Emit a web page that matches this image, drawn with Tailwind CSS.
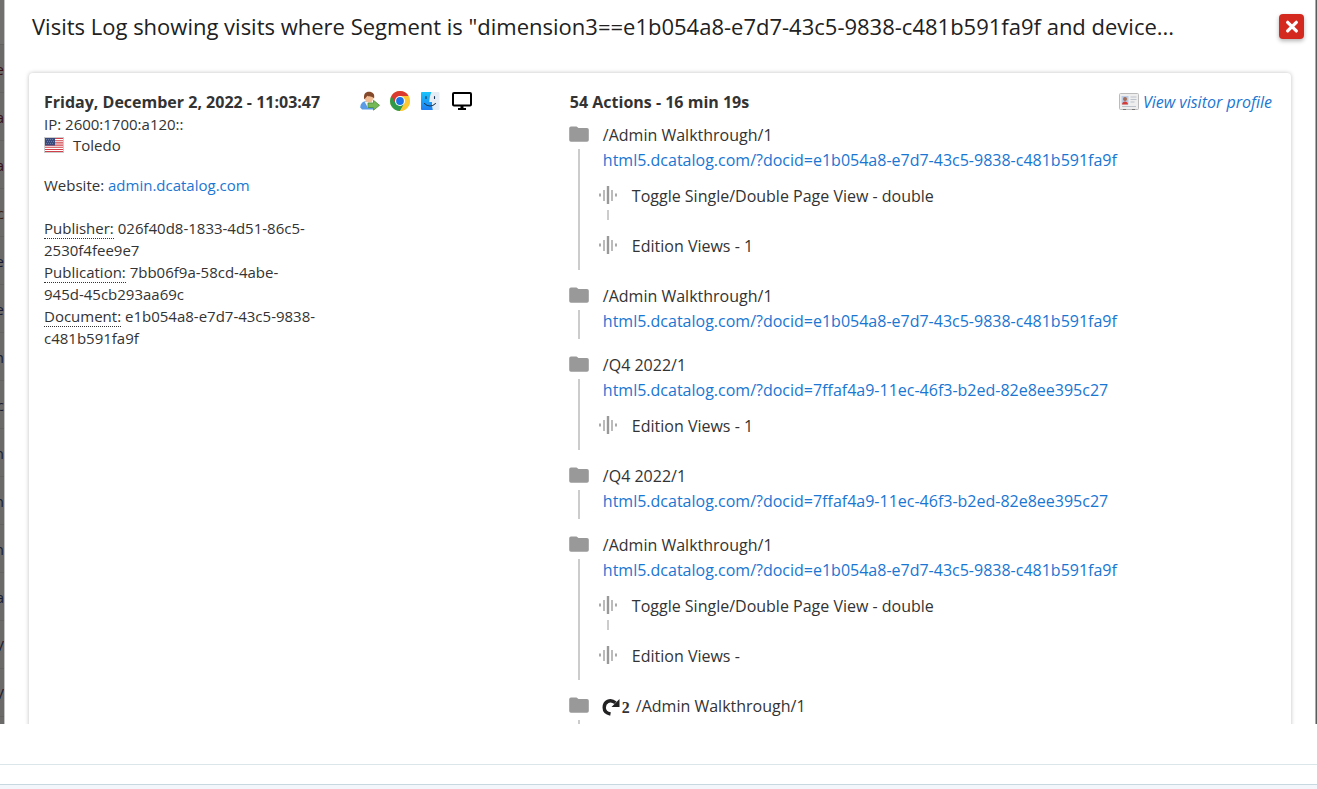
<!DOCTYPE html>
<html lang="en">
  <head>
    <meta charset="UTF-8" />
    <meta name="viewport" content="width=device-width, initial-scale=1.0" />
    <title>Visits Log</title>
    <script src="https://cdn.jsdelivr.net/npm/@tailwindcss/browser@4"></script>
  </head>
  <body class="flex h-screen flex-col overflow-hidden bg-white font-['Open_Sans','Noto_Sans',sans-serif] text-[15px] leading-[22px] text-[#333]">
    <!-- shared icons -->
    <svg class="hidden">
      <symbol id="folder" viewBox="0 0 20 16">
        <path d="M2 0.500h5.500l2 1.500H18a1.800 1.800 0 0 1 1.800 1.800V14a1.800 1.800 0 0 1-1.800 1.800H2A1.800 1.800 0 0 1 .2 14V2.300A1.800 1.800 0 0 1 2 .5z" fill="#999" />
      </symbol>
      <symbol id="event" viewBox="0 0 18 18">
        <path d="M1 7.500v3M17 7.500v3" stroke="#aaa" stroke-width="2" />
        <path d="M5 4v11M13 4v11" stroke="#bbb" stroke-width="2" />
        <path d="M9 0v18" stroke="#999" stroke-width="2.400" />
      </symbol>
    </svg>

    <div class="flex min-h-0 flex-1 overflow-hidden">
      <!-- page behind the overlay -->
      <aside aria-hidden="true" class="w-[5px] shrink-0 overflow-hidden border-r border-[#c4c4c4] bg-[#6c6a68] text-[#1c1c30]">
        <div class="h-11 bg-[#72706e]"></div>
        <ul>
          <li class="flex h-12 items-center justify-end border-t border-[#646260] text-[#3a1010]">e</li>
          <li class="flex h-12 items-center justify-end border-t border-[#646260] text-[#3a1010]">a</li>
          <li class="flex h-12 items-center justify-end border-t border-[#646260] text-[#3a1010]">a</li>
          <li class="flex h-12 items-center justify-end border-t border-[#646260] text-[#3a2010]">c</li>
          <li class="flex h-12 items-center justify-end border-t border-[#646260]">e</li>
          <li class="flex h-12 items-center justify-end border-t border-[#646260]">e</li>
          <li class="flex h-12 items-center justify-end border-t border-[#646260]">h</li>
          <li class="flex h-12 items-center justify-end border-t border-[#646260]">c</li>
          <li class="flex h-12 items-center justify-end border-t border-[#646260]">n</li>
          <li class="flex h-12 items-center justify-end border-t border-[#646260]">n</li>
          <li class="flex h-12 items-center justify-end border-t border-[#646260]">n</li>
          <li class="flex h-12 items-center justify-end border-t border-[#646260]">a</li>
          <li class="flex h-12 items-center justify-end border-t border-[#646260]">V</li>
          <li class="flex h-12 items-center justify-end border-t border-[#646260]">V</li>
          <li class="h-12 border-t border-[#646260]"></li>
        </ul>
      </aside>

      <main class="min-w-0 flex-1 pr-[11px] pl-6">
        <header class="flex h-[73px] items-start justify-between pt-3">
          <h1 class="truncate pl-[3px] text-[22px] leading-7 text-[#212121]">Visits Log showing visits where Segment is "dimension3==e1b054a8-e7d7-43c5-9838-c481b591fa9f and device...</h1>
          <button type="button" aria-label="Close" class="mt-[2px] flex size-[25px] shrink-0 items-center justify-center rounded bg-[#d4291f] shadow-[0_2px_4px_rgba(0,0,0,0.3)]">
            <svg viewBox="0 0 12 12" class="size-[14px]"><path d="M2.300 2l7.400 7.400M9.700 2l-7.400 7.400" stroke="#fff" stroke-width="2.800" stroke-linecap="round" /></svg>
          </button>
        </header>

        <section class="mr-[13px] grid grid-cols-12 rounded-sm bg-white pt-[18px] shadow-[0_0_4px_rgba(0,0,0,0.25)]">
          <div class="col-span-3 px-[15px]">
            <h2 class="text-base leading-[22px] font-bold whitespace-nowrap">Friday, December 2, 2022 - 11:03:47</h2>
            <p>IP: 2600:1700:a120::</p>
            <p class="flex items-center gap-[9px] leading-5">
              <svg viewBox="0 0 20 16" class="h-4 w-5">
                <rect width="20" height="16" fill="#ccc" />
                <rect x="1" y="1" width="18" height="14" fill="#fff" />
                <path d="M1 1.500h18M1 3.700h18M1 5.900h18M1 8.100h18M1 10.300h18M1 12.500h18M1 14.500h18" stroke="#d0404a" stroke-width="1.100" />
                <rect x="1" y="1" width="10" height="7.500" fill="#3a4a7c" />
                <path d="M2 2.500h8M3 4.500h7M2 6.500h8" stroke="#8290b4" stroke-width=".7" stroke-dasharray="1 1" />
              </svg>
              <span>Toledo</span>
            </p>
            <p class="mt-[19px]">Website: <a href="#" class="text-[#1976d2]">admin.dcatalog.com</a></p>
            <div class="mt-[21px]">
              <p><span class="border-b border-dotted border-[#333]">Publisher:</span> 026f40d8-1833-4d51-86c5-2530f4fee9e7</p>
              <p><span class="border-b border-dotted border-[#333]">Publication:</span> 7bb06f9a-58cd-4abe-<br />945d-45cb293aa69c</p>
              <p><span class="border-b border-dotted border-[#333]">Document:</span> e1b054a8-e7d7-43c5-9838-c481b591fa9f</p>
            </div>
          </div>

          <div class="col-span-2 flex items-start gap-[10px] px-[15px]">
            <!-- returning visitor -->
            <svg viewBox="0 0 20 20" class="size-5">
              <path d="M.3 16.500c0-3.500 2-6 5.700-6.500h5l3 8.500H2z" fill="#5b9be6" />
              <path d="M4.500 10.500L8 17l4-6z" fill="#f2f4f8" />
              <ellipse cx="9" cy="7" rx="4.200" ry="4.500" fill="#f0bd94" />
              <path d="M4.200 8.500C3.300 3 5.500.8 9 .8s6.200 2 5 7C13.200 5.500 10 6 7.500 4.800 6 6 5.600 7.500 4.200 8.500z" fill="#84492a" />
              <path d="M8 12h5.500V9.300l6 5-6 4.900v-2.700H8z" fill="#75b957" stroke="#4b8d37" stroke-width=".8" />
            </svg>
            <!-- chrome -->
            <svg viewBox="0 0 20 20" class="size-5">
              <circle cx="10" cy="10" r="10" fill="#fcc934" />
              <path d="M10 10L1.340 5A10 10 0 0 0 10 20l4.330-7.500z" fill="#2d9a4b" />
              <path d="M1.340 5A10 10 0 0 1 18.660 5H10L5.670 12.500z" fill="#db3a30" />
              <path d="M10 5h8.660A10 10 0 0 1 10 20l4.330-7.500z" fill="#fcc934" />
              <circle cx="10" cy="10" r="5" fill="#fff" />
              <circle cx="10" cy="10" r="3.900" fill="#1a73e8" />
            </svg>
            <!-- finder -->
            <svg viewBox="0 0 20 20" class="size-5">
              <defs>
                <linearGradient id="finder" x1="0" y1="0" x2="0" y2="1"><stop stop-color="#19c4fb" /><stop offset="1" stop-color="#1d7df2" /></linearGradient>
              </defs>
              <rect x="1" y="1" width="18.500" height="18" rx="1" fill="#e6edf5" />
              <path d="M2 1h9.500C10 4 9.500 7 9.300 11H12c0 3 .2 5.500.8 8H2a1 1 0 0 1-1-1V2a1 1 0 0 1 1-1z" fill="url(#finder)" />
              <path d="M6 5.500v2M14.500 5.500v2M4.500 12.500c3 3.300 8 3.300 11 0" fill="none" stroke="#17344f" stroke-width="1.100" stroke-linecap="round" />
            </svg>
            <!-- desktop -->
            <svg viewBox="0 0 20 20" class="ml-[2px] size-5">
              <rect x="1" y="2" width="18" height="12.500" rx="1" fill="none" stroke="#000" stroke-width="2" />
              <path d="M8.500 14h3v3H14v2H6v-2h2.500z" />
            </svg>
          </div>

          <div class="col-span-7 pr-[15px] pl-[14px] text-base">
            <div class="flex items-center justify-between pr-1 pl-px leading-[22px]">
              <h2 class="font-bold">54 Actions - 16 min 19s</h2>
              <a href="#" class="flex items-center gap-1 text-[#1976d2] italic">
                <svg viewBox="0 0 20 18" class="h-[18px] w-5">
                  <rect x=".5" y=".5" width="19" height="16" rx="1" fill="#eee" stroke="#bbb" />
                  <rect x="2.500" y="3" width="7" height="8.500" fill="#b9cbe6" />
                  <circle cx="6" cy="6" r="2" fill="#a56b53" />
                  <path d="M3 11.500c0-4 6-4 6 0z" fill="#d33b36" />
                  <path d="M11.500 4h6M11.500 6.500h6M11.500 9h4M3 13.500h14" stroke="#bcc3cb" />
                  <path d="M4 16.500h3M13 16.500h3" stroke="#777" />
                </svg>
                View visitor profile
              </a>
            </div>

            <ol class="pt-[10px]">
              <li class="flex gap-[14px]">
                <div class="flex w-5 shrink-0 flex-col items-center pt-[3px] pb-[14px]">
                  <svg class="h-4 w-5 shrink-0"><use href="#folder" /></svg>
                  <span class="mt-[7px] w-[2px] flex-1 bg-[#ccc]"></span>
                </div>
                <div class="min-w-0 flex-1">
                  <p class="leading-[25px]">/Admin Walkthrough/1</p>
                  <a href="#" class="block leading-[25px] text-[#1976d2]">html5.dcatalog.com/?docid=e1b054a8-e7d7-43c5-9838-c481b591fa9f</a>
                  <ul class="mt-[11px] -ml-1">
                    <li class="flex h-[50px] gap-[15px]">
                      <div class="flex w-[18px] flex-col items-center pt-[2px]">
                        <svg class="size-[18px]"><use href="#event" /></svg>
                        <span class="mt-[6px] h-[10px] w-[2px] bg-[#ccc]"></span>
                      </div>
                      <span class="leading-6">Toggle Single/Double Page View - double</span>
                    </li>
                    <li class="flex h-[50px] gap-[15px]">
                      <div class="w-[18px] pt-[2px]"><svg class="size-[18px]"><use href="#event" /></svg></div>
                      <span class="leading-6">Edition Views - 1</span>
                    </li>
                  </ul>
                </div>
              </li>

              <li class="flex gap-[14px]">
                <div class="flex w-5 shrink-0 flex-col items-center pt-[3px] pb-[14px]">
                  <svg class="h-4 w-5 shrink-0"><use href="#folder" /></svg>
                  <span class="mt-[7px] w-[2px] flex-1 bg-[#ccc]"></span>
                </div>
                <div class="min-w-0 flex-1 pb-[19px]">
                  <p class="leading-[25px]">/Admin Walkthrough/1</p>
                  <a href="#" class="block leading-[25px] text-[#1976d2]">html5.dcatalog.com/?docid=e1b054a8-e7d7-43c5-9838-c481b591fa9f</a>
                </div>
              </li>

              <li class="flex gap-[14px]">
                <div class="flex w-5 shrink-0 flex-col items-center pt-[3px] pb-[14px]">
                  <svg class="h-4 w-5 shrink-0"><use href="#folder" /></svg>
                  <span class="mt-[7px] w-[2px] flex-1 bg-[#ccc]"></span>
                </div>
                <div class="min-w-0 flex-1">
                  <p class="leading-[25px]">/Q4 2022/1</p>
                  <a href="#" class="block leading-[25px] text-[#1976d2]">html5.dcatalog.com/?docid=7ffaf4a9-11ec-46f3-b2ed-82e8ee395c27</a>
                  <ul class="mt-[11px] -ml-1">
                    <li class="flex h-[50px] gap-[15px]">
                      <div class="w-[18px] pt-[2px]"><svg class="size-[18px]"><use href="#event" /></svg></div>
                      <span class="leading-6">Edition Views - 1</span>
                    </li>
                  </ul>
                </div>
              </li>

              <li class="flex gap-[14px]">
                <div class="flex w-5 shrink-0 flex-col items-center pt-[3px] pb-[14px]">
                  <svg class="h-4 w-5 shrink-0"><use href="#folder" /></svg>
                  <span class="mt-[7px] w-[2px] flex-1 bg-[#ccc]"></span>
                </div>
                <div class="min-w-0 flex-1 pb-[19px]">
                  <p class="leading-[25px]">/Q4 2022/1</p>
                  <a href="#" class="block leading-[25px] text-[#1976d2]">html5.dcatalog.com/?docid=7ffaf4a9-11ec-46f3-b2ed-82e8ee395c27</a>
                </div>
              </li>

              <li class="flex gap-[14px]">
                <div class="flex w-5 shrink-0 flex-col items-center pt-[3px] pb-[14px]">
                  <svg class="h-4 w-5 shrink-0"><use href="#folder" /></svg>
                  <span class="mt-[7px] w-[2px] flex-1 bg-[#ccc]"></span>
                </div>
                <div class="min-w-0 flex-1">
                  <p class="leading-[25px]">/Admin Walkthrough/1</p>
                  <a href="#" class="block leading-[25px] text-[#1976d2]">html5.dcatalog.com/?docid=e1b054a8-e7d7-43c5-9838-c481b591fa9f</a>
                  <ul class="mt-[11px] -ml-1">
                    <li class="flex h-[50px] gap-[15px]">
                      <div class="flex w-[18px] flex-col items-center pt-[2px]">
                        <svg class="size-[18px]"><use href="#event" /></svg>
                        <span class="mt-[6px] h-[10px] w-[2px] bg-[#ccc]"></span>
                      </div>
                      <span class="leading-6">Toggle Single/Double Page View - double</span>
                    </li>
                    <li class="flex h-[50px] gap-[15px]">
                      <div class="w-[18px] pt-[2px]"><svg class="size-[18px]"><use href="#event" /></svg></div>
                      <span class="leading-6">Edition Views -</span>
                    </li>
                  </ul>
                </div>
              </li>

              <li class="flex h-[68px] gap-[14px]">
                <div class="flex w-5 shrink-0 flex-col items-center pt-[3px] pb-[14px]">
                  <svg class="h-4 w-5 shrink-0"><use href="#folder" /></svg>
                  <span class="mt-[7px] w-[2px] flex-1 bg-[#ccc]"></span>
                </div>
                <p class="flex min-w-0 flex-1 items-start leading-[25px]">
                  <svg viewBox="0 0 18 18" class="mt-1 -ml-px size-[18px]">
                    <path d="M13.500 4.800C8 .2 2.200 4 2.200 9.500c0 3 2 5.700 6.300 6.500" fill="none" stroke="#222" stroke-width="3.400" />
                    <path d="M17.500 1v8H9.500z" fill="#222" />
                  </svg>
                  <span class="mr-[6px] ml-[2px] pt-px font-['Liberation_Serif',serif] font-bold">2</span>
                  /Admin Walkthrough/1
                </p>
              </li>
            </ol>
          </div>
        </section>
      </main>
      <div class="w-[2px] shrink-0 border-l border-[#aaa] bg-[#5c5c5c]"></div>
    </div>

    <footer class="shrink-0 pt-10">
      <div class="h-5 border-t border-[#dbe6ea]"></div>
      <div class="h-[5px] border-t border-[#c8d8e0] bg-[#f3f6fa]"></div>
    </footer>
  </body>
</html>
